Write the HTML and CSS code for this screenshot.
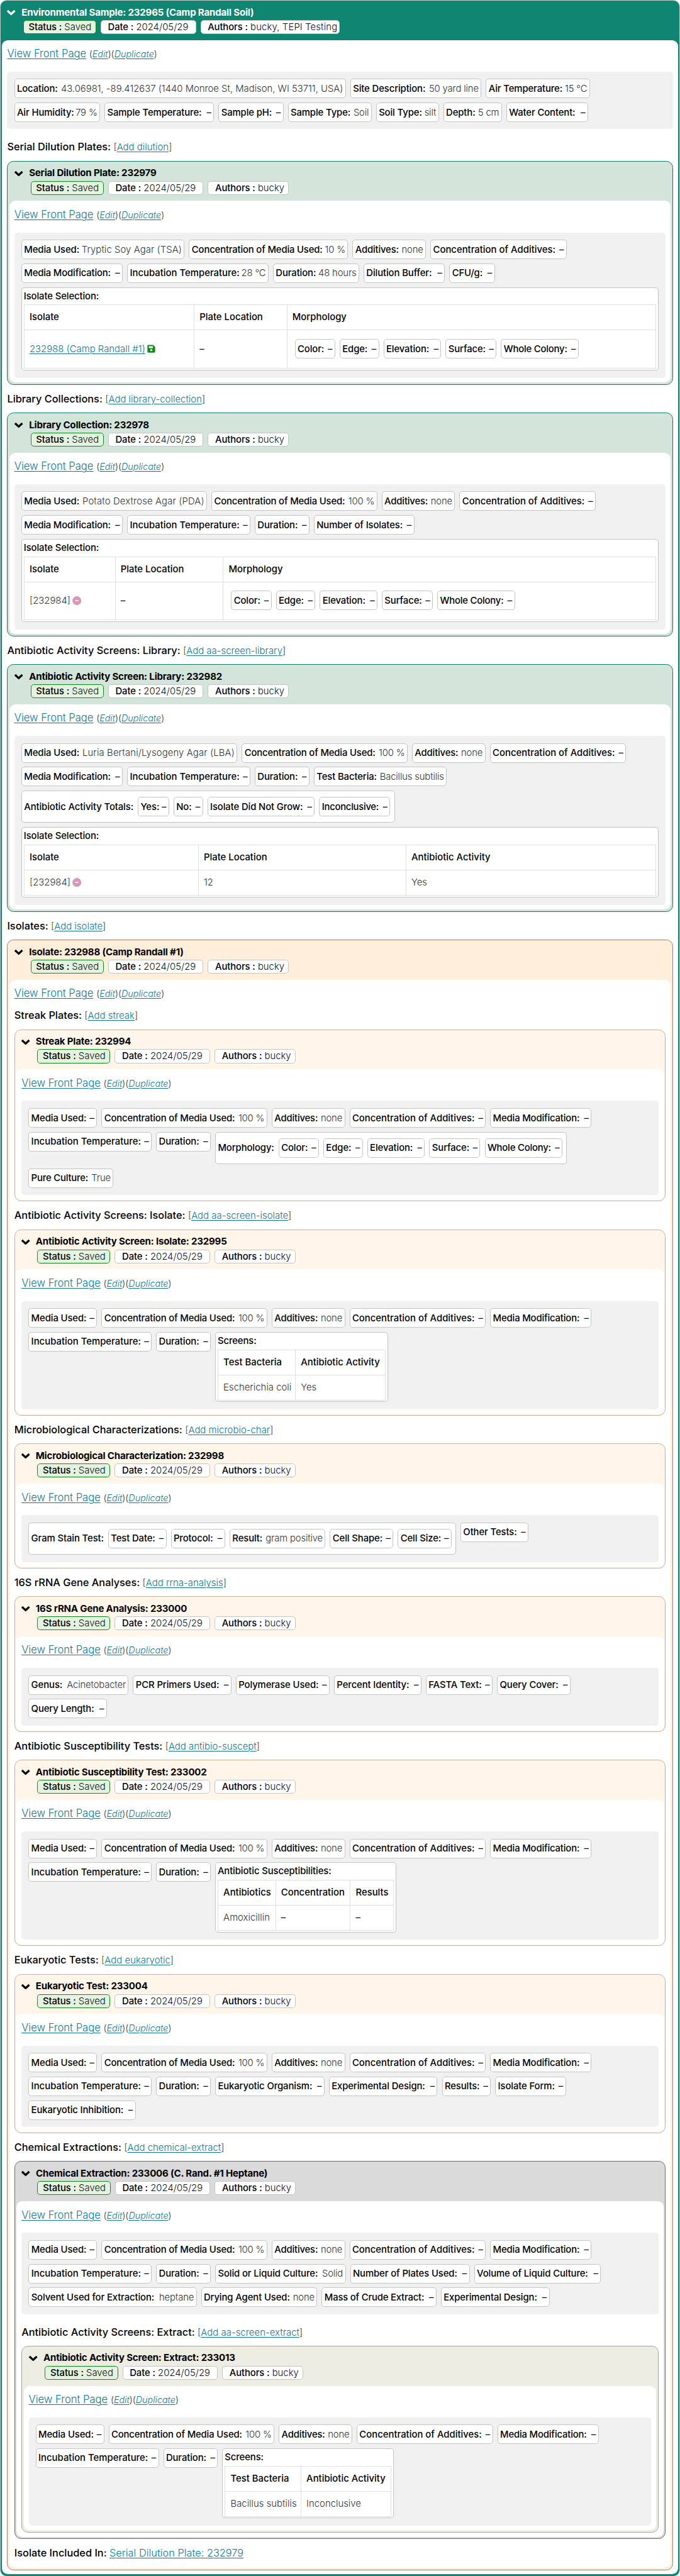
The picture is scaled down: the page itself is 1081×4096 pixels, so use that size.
FILE: index.html
```html
<!DOCTYPE html>
<html lang="en">
<head>
<meta charset="utf-8">
<title>Environmental Sample: 232965</title>
<link rel="stylesheet" href="styles.css">
</head>
<body>
<svg class="defs" aria-hidden="true">
  <symbol id="chevron" viewBox="0 0 16 10"><path d="M2 2l6 5.6L14 2" fill="none" stroke="currentColor" stroke-width="3.4"/></symbol>
  <symbol id="save" viewBox="0 0 14 14"><path fill="#118a1d" fill-rule="evenodd" d="M2 .5h8.2L13.6 4v8a1.6 1.6 0 0 1-1.6 1.6H2A1.6 1.6 0 0 1 .4 12V2A1.6 1.6 0 0 1 2 .5zM2.8 2.6v3.2h7V2.6zM7 7.6a1.9 1.9 0 1 0 0 3.8 1.9 1.9 0 0 0 0-3.8z"/></symbol>
  <symbol id="minus" viewBox="0 0 15 15"><circle cx="7.5" cy="7.5" r="7.4" fill="#d998b8"/><path d="M5 7.5h5" stroke="#fff" stroke-width="1.8"/></symbol>
</svg>
<article class="card sample">
  <header class="head">
    <h2 class="title"><svg class="chev"><use href="#chevron"/></svg>Environmental Sample: 232965 (Camp Randall Soil)</h2>
    <div class="meta"><span class="tag saved"><b>Status :</b> Saved</span><span class="tag date"><b>Date :</b> 2024/05/29</span><span class="tag team"><b>Authors :</b> bucky, TEPI Testing</span></div>
  </header>
  <div class="body">
    <p class="view"><a href="#">View Front Page</a> <small>(<a href="#"><i>Edit</i></a>)(<a href="#"><i>Duplicate</i></a>)</small></p>
    <div class="panel">
      <div class="row"><span class="chip location"><b>Location:</b><span>43.06981, -89.412637 (1440 Monroe St, Madison, WI 53711, USA)</span></span><span class="chip site"><b>Site Description:</b><span>50 yard line</span></span><span class="chip air-temp"><b>Air Temperature:</b><span>15 °C</span></span></div>
      <div class="row"><span class="chip humidity"><b>Air Humidity:</b><span>79 %</span></span><span class="chip sample-temp"><b>Sample Temperature:</b><em>–</em></span><span class="chip ph"><b>Sample pH:</b><em>–</em></span><span class="chip sample-type"><b>Sample Type:</b><span>Soil</span></span><span class="chip soil-type"><b>Soil Type:</b><span>silt</span></span><span class="chip depth"><b>Depth:</b><span>5 cm</span></span><span class="chip water"><b>Water Content:</b><em>–</em></span></div>
    </div>

    <h3 class="section after-panel">Serial Dilution Plates: <small>[<a href="#">Add dilution</a>]</small></h3>
    <article class="card green">
      <header class="head">
        <h2 class="title"><svg class="chev"><use href="#chevron"/></svg>Serial Dilution Plate: 232979</h2>
        <div class="meta"><span class="tag saved"><b>Status :</b> Saved</span><span class="tag date"><b>Date :</b> 2024/05/29</span><span class="tag author"><b>Authors :</b> bucky</span></div>
      </header>
      <div class="body">
        <p class="view"><a href="#">View Front Page</a> <small>(<a href="#"><i>Edit</i></a>)(<a href="#"><i>Duplicate</i></a>)</small></p>
        <div class="panel">
          <div class="row"><span class="chip media-tsa"><b>Media Used:</b><span>Tryptic Soy Agar (TSA)</span></span><span class="chip conc-10"><b>Concentration of Media Used:</b><span>10 %</span></span><span class="chip additives"><b>Additives:</b><span>none</span></span><span class="chip conc-add"><b>Concentration of Additives:</b><em>–</em></span></div>
          <div class="row"><span class="chip media-mod"><b>Media Modification:</b><em>–</em></span><span class="chip incubation-28"><b>Incubation Temperature:</b><span>28 °C</span></span><span class="chip duration-48"><b>Duration:</b><span>48 hours</span></span><span class="chip buffer"><b>Dilution Buffer:</b><em>–</em></span><span class="chip cfu"><b>CFU/g:</b><em>–</em></span></div>
          <div class="box wide">
            <b class="label">Isolate Selection:</b>
            <table class="grid dilution">
              <tr><th>Isolate</th><th>Plate Location</th><th>Morphology</th></tr>
              <tr class="tall"><td><a href="#">232988 (Camp Randall #1)</a><svg class="save"><use href="#save"/></svg></td><td><em>–</em></td><td><div class="row inset"><span class="chip color"><b>Color:</b><em>–</em></span><span class="chip edge"><b>Edge:</b><em>–</em></span><span class="chip elevation"><b>Elevation:</b><em>–</em></span><span class="chip surface"><b>Surface:</b><em>–</em></span><span class="chip colony"><b>Whole Colony:</b><em>–</em></span></div></td></tr>
            </table>
          </div>
        </div>
      </div>
    </article>

    <h3 class="section">Library Collections: <small>[<a href="#">Add library-collection</a>]</small></h3>
    <article class="card green">
      <header class="head">
        <h2 class="title"><svg class="chev"><use href="#chevron"/></svg>Library Collection: 232978</h2>
        <div class="meta"><span class="tag saved"><b>Status :</b> Saved</span><span class="tag date"><b>Date :</b> 2024/05/29</span><span class="tag author"><b>Authors :</b> bucky</span></div>
      </header>
      <div class="body">
        <p class="view"><a href="#">View Front Page</a> <small>(<a href="#"><i>Edit</i></a>)(<a href="#"><i>Duplicate</i></a>)</small></p>
        <div class="panel">
          <div class="row"><span class="chip media-pda"><b>Media Used:</b><span>Potato Dextrose Agar (PDA)</span></span><span class="chip conc-media"><b>Concentration of Media Used:</b><span>100 %</span></span><span class="chip additives"><b>Additives:</b><span>none</span></span><span class="chip conc-add"><b>Concentration of Additives:</b><em>–</em></span></div>
          <div class="row"><span class="chip media-mod"><b>Media Modification:</b><em>–</em></span><span class="chip incubation"><b>Incubation Temperature:</b><em>–</em></span><span class="chip duration"><b>Duration:</b><em>–</em></span><span class="chip isolates"><b>Number of Isolates:</b><em>–</em></span></div>
          <div class="box wide">
            <b class="label">Isolate Selection:</b>
            <table class="grid library">
              <tr><th>Isolate</th><th>Plate Location</th><th>Morphology</th></tr>
              <tr class="tall"><td>[232984]<svg class="minus"><use href="#minus"/></svg></td><td><em>–</em></td><td><div class="row inset"><span class="chip color"><b>Color:</b><em>–</em></span><span class="chip edge"><b>Edge:</b><em>–</em></span><span class="chip elevation"><b>Elevation:</b><em>–</em></span><span class="chip surface"><b>Surface:</b><em>–</em></span><span class="chip colony"><b>Whole Colony:</b><em>–</em></span></div></td></tr>
            </table>
          </div>
        </div>
      </div>
    </article>

    <h3 class="section">Antibiotic Activity Screens: Library: <small>[<a href="#">Add aa-screen-library</a>]</small></h3>
    <article class="card green">
      <header class="head">
        <h2 class="title"><svg class="chev"><use href="#chevron"/></svg>Antibiotic Activity Screen: Library: 232982</h2>
        <div class="meta"><span class="tag saved"><b>Status :</b> Saved</span><span class="tag date"><b>Date :</b> 2024/05/29</span><span class="tag author"><b>Authors :</b> bucky</span></div>
      </header>
      <div class="body">
        <p class="view"><a href="#">View Front Page</a> <small>(<a href="#"><i>Edit</i></a>)(<a href="#"><i>Duplicate</i></a>)</small></p>
        <div class="panel">
          <div class="row"><span class="chip media-lba"><b>Media Used:</b><span>Luria Bertani/Lysogeny Agar (LBA)</span></span><span class="chip conc-media"><b>Concentration of Media Used:</b><span>100 %</span></span><span class="chip additives"><b>Additives:</b><span>none</span></span><span class="chip conc-add"><b>Concentration of Additives:</b><em>–</em></span></div>
          <div class="row"><span class="chip media-mod"><b>Media Modification:</b><em>–</em></span><span class="chip incubation"><b>Incubation Temperature:</b><em>–</em></span><span class="chip duration"><b>Duration:</b><em>–</em></span><span class="chip bacteria"><b>Test Bacteria:</b><span>Bacillus subtilis</span></span></div>
          <div class="row"><div class="group"><b>Antibiotic Activity Totals:</b><div class="row"><span class="chip yes"><b>Yes:</b><em>–</em></span><span class="chip no"><b>No:</b><em>–</em></span><span class="chip no-growth"><b>Isolate Did Not Grow:</b><em>–</em></span><span class="chip inconclusive"><b>Inconclusive:</b><em>–</em></span></div></div></div>
          <div class="box wide">
            <b class="label">Isolate Selection:</b>
            <table class="grid screen">
              <tr><th>Isolate</th><th>Plate Location</th><th>Antibiotic Activity</th></tr>
              <tr><td>[232984]<svg class="minus"><use href="#minus"/></svg></td><td>12</td><td>Yes</td></tr>
            </table>
          </div>
        </div>
      </div>
    </article>

    <h3 class="section">Isolates: <small>[<a href="#">Add isolate</a>]</small></h3>
    <article class="card isolate">
      <header class="head">
        <h2 class="title"><svg class="chev"><use href="#chevron"/></svg>Isolate: 232988 (Camp Randall #1)</h2>
        <div class="meta"><span class="tag saved"><b>Status :</b> Saved</span><span class="tag date"><b>Date :</b> 2024/05/29</span><span class="tag author"><b>Authors :</b> bucky</span></div>
      </header>
      <div class="body">
        <p class="view"><a href="#">View Front Page</a> <small>(<a href="#"><i>Edit</i></a>)(<a href="#"><i>Duplicate</i></a>)</small></p>

        <h3 class="section after-view">Streak Plates: <small>[<a href="#">Add streak</a>]</small></h3>
        <article class="card cream">
          <header class="head">
            <h2 class="title"><svg class="chev"><use href="#chevron"/></svg>Streak Plate: 232994</h2>
            <div class="meta"><span class="tag saved"><b>Status :</b> Saved</span><span class="tag date"><b>Date :</b> 2024/05/29</span><span class="tag author"><b>Authors :</b> bucky</span></div>
          </header>
          <div class="body">
            <p class="view"><a href="#">View Front Page</a> <small>(<a href="#"><i>Edit</i></a>)(<a href="#"><i>Duplicate</i></a>)</small></p>
            <div class="panel">
              <div class="row"><span class="chip media"><b>Media Used:</b><em>–</em></span><span class="chip conc-media"><b>Concentration of Media Used:</b><span>100 %</span></span><span class="chip additives"><b>Additives:</b><span>none</span></span><span class="chip conc-add"><b>Concentration of Additives:</b><em>–</em></span><span class="chip media-mod"><b>Media Modification:</b><em>–</em></span></div>
              <div class="row"><span class="chip incubation"><b>Incubation Temperature:</b><em>–</em></span><span class="chip duration"><b>Duration:</b><em>–</em></span><div class="group"><b>Morphology:</b><div class="row"><span class="chip color"><b>Color:</b><em>–</em></span><span class="chip edge"><b>Edge:</b><em>–</em></span><span class="chip elevation"><b>Elevation:</b><em>–</em></span><span class="chip surface"><b>Surface:</b><em>–</em></span><span class="chip colony"><b>Whole Colony:</b><em>–</em></span></div></div></div>
              <div class="row"><span class="chip culture"><b>Pure Culture:</b><span>True</span></span></div>
            </div>
          </div>
        </article>

        <h3 class="section">Antibiotic Activity Screens: Isolate: <small>[<a href="#">Add aa-screen-isolate</a>]</small></h3>
        <article class="card cream">
          <header class="head">
            <h2 class="title"><svg class="chev"><use href="#chevron"/></svg>Antibiotic Activity Screen: Isolate: 232995</h2>
            <div class="meta"><span class="tag saved"><b>Status :</b> Saved</span><span class="tag date"><b>Date :</b> 2024/05/29</span><span class="tag author"><b>Authors :</b> bucky</span></div>
          </header>
          <div class="body">
            <p class="view"><a href="#">View Front Page</a> <small>(<a href="#"><i>Edit</i></a>)(<a href="#"><i>Duplicate</i></a>)</small></p>
            <div class="panel">
              <div class="row"><span class="chip media"><b>Media Used:</b><em>–</em></span><span class="chip conc-media"><b>Concentration of Media Used:</b><span>100 %</span></span><span class="chip additives"><b>Additives:</b><span>none</span></span><span class="chip conc-add"><b>Concentration of Additives:</b><em>–</em></span><span class="chip media-mod"><b>Media Modification:</b><em>–</em></span></div>
              <div class="row"><span class="chip incubation"><b>Incubation Temperature:</b><em>–</em></span><span class="chip duration"><b>Duration:</b><em>–</em></span>
                <div class="box screens-isolate">
                  <b class="label">Screens:</b>
                  <table class="grid bacteria-isolate">
                    <tr><th>Test Bacteria</th><th>Antibiotic Activity</th></tr>
                    <tr><td>Escherichia coli</td><td>Yes</td></tr>
                  </table>
                </div>
              </div>
            </div>
          </div>
        </article>

        <h3 class="section">Microbiological Characterizations: <small>[<a href="#">Add microbio-char</a>]</small></h3>
        <article class="card cream">
          <header class="head">
            <h2 class="title"><svg class="chev"><use href="#chevron"/></svg>Microbiological Characterization: 232998</h2>
            <div class="meta"><span class="tag saved"><b>Status :</b> Saved</span><span class="tag date"><b>Date :</b> 2024/05/29</span><span class="tag author"><b>Authors :</b> bucky</span></div>
          </header>
          <div class="body">
            <p class="view"><a href="#">View Front Page</a> <small>(<a href="#"><i>Edit</i></a>)(<a href="#"><i>Duplicate</i></a>)</small></p>
            <div class="panel">
              <div class="row"><div class="group"><b>Gram Stain Test:</b><div class="row"><span class="chip test-date"><b>Test Date:</b><em>–</em></span><span class="chip protocol"><b>Protocol:</b><em>–</em></span><span class="chip result"><b>Result:</b><span>gram positive</span></span><span class="chip cell-shape"><b>Cell Shape:</b><em>–</em></span><span class="chip cell-size"><b>Cell Size:</b><em>–</em></span></div></div><span class="chip other"><b>Other Tests:</b><em>–</em></span></div>
            </div>
          </div>
        </article>

        <h3 class="section">16S rRNA Gene Analyses: <small>[<a href="#">Add rrna-analysis</a>]</small></h3>
        <article class="card cream">
          <header class="head">
            <h2 class="title"><svg class="chev"><use href="#chevron"/></svg>16S rRNA Gene Analysis: 233000</h2>
            <div class="meta"><span class="tag saved"><b>Status :</b> Saved</span><span class="tag date"><b>Date :</b> 2024/05/29</span><span class="tag author"><b>Authors :</b> bucky</span></div>
          </header>
          <div class="body">
            <p class="view"><a href="#">View Front Page</a> <small>(<a href="#"><i>Edit</i></a>)(<a href="#"><i>Duplicate</i></a>)</small></p>
            <div class="panel">
              <div class="row"><span class="chip genus"><b>Genus:</b><span>Acinetobacter</span></span><span class="chip pcr"><b>PCR Primers Used:</b><em>–</em></span><span class="chip polymerase"><b>Polymerase Used:</b><em>–</em></span><span class="chip identity"><b>Percent Identity:</b><em>–</em></span><span class="chip fasta"><b>FASTA Text:</b><em>–</em></span><span class="chip cover"><b>Query Cover:</b><em>–</em></span></div>
              <div class="row"><span class="chip length"><b>Query Length:</b><em>–</em></span></div>
            </div>
          </div>
        </article>

        <h3 class="section">Antibiotic Susceptibility Tests: <small>[<a href="#">Add antibio-suscept</a>]</small></h3>
        <article class="card cream">
          <header class="head">
            <h2 class="title"><svg class="chev"><use href="#chevron"/></svg>Antibiotic Susceptibility Test: 233002</h2>
            <div class="meta"><span class="tag saved"><b>Status :</b> Saved</span><span class="tag date"><b>Date :</b> 2024/05/29</span><span class="tag author"><b>Authors :</b> bucky</span></div>
          </header>
          <div class="body">
            <p class="view"><a href="#">View Front Page</a> <small>(<a href="#"><i>Edit</i></a>)(<a href="#"><i>Duplicate</i></a>)</small></p>
            <div class="panel">
              <div class="row"><span class="chip media"><b>Media Used:</b><em>–</em></span><span class="chip conc-media"><b>Concentration of Media Used:</b><span>100 %</span></span><span class="chip additives"><b>Additives:</b><span>none</span></span><span class="chip conc-add"><b>Concentration of Additives:</b><em>–</em></span><span class="chip media-mod"><b>Media Modification:</b><em>–</em></span></div>
              <div class="row"><span class="chip incubation"><b>Incubation Temperature:</b><em>–</em></span><span class="chip duration"><b>Duration:</b><em>–</em></span>
                <div class="box suscept">
                  <b class="label">Antibiotic Susceptibilities:</b>
                  <table class="grid antibiotics">
                    <tr><th>Antibiotics</th><th>Concentration</th><th>Results</th></tr>
                    <tr><td>Amoxicillin</td><td><em>–</em></td><td><em>–</em></td></tr>
                  </table>
                </div>
              </div>
            </div>
          </div>
        </article>

        <h3 class="section">Eukaryotic Tests: <small>[<a href="#">Add eukaryotic</a>]</small></h3>
        <article class="card cream">
          <header class="head">
            <h2 class="title"><svg class="chev"><use href="#chevron"/></svg>Eukaryotic Test: 233004</h2>
            <div class="meta"><span class="tag saved"><b>Status :</b> Saved</span><span class="tag date"><b>Date :</b> 2024/05/29</span><span class="tag author"><b>Authors :</b> bucky</span></div>
          </header>
          <div class="body">
            <p class="view"><a href="#">View Front Page</a> <small>(<a href="#"><i>Edit</i></a>)(<a href="#"><i>Duplicate</i></a>)</small></p>
            <div class="panel">
              <div class="row"><span class="chip media"><b>Media Used:</b><em>–</em></span><span class="chip conc-media"><b>Concentration of Media Used:</b><span>100 %</span></span><span class="chip additives"><b>Additives:</b><span>none</span></span><span class="chip conc-add"><b>Concentration of Additives:</b><em>–</em></span><span class="chip media-mod"><b>Media Modification:</b><em>–</em></span></div>
              <div class="row"><span class="chip incubation"><b>Incubation Temperature:</b><em>–</em></span><span class="chip duration"><b>Duration:</b><em>–</em></span><span class="chip organism"><b>Eukaryotic Organism:</b><em>–</em></span><span class="chip design"><b>Experimental Design:</b><em>–</em></span><span class="chip results"><b>Results:</b><em>–</em></span><span class="chip form"><b>Isolate Form:</b><em>–</em></span></div>
              <div class="row"><span class="chip inhibition"><b>Eukaryotic Inhibition:</b><em>–</em></span></div>
            </div>
          </div>
        </article>

        <h3 class="section">Chemical Extractions: <small>[<a href="#">Add chemical-extract</a>]</small></h3>
        <article class="card gray">
          <header class="head">
            <h2 class="title"><svg class="chev"><use href="#chevron"/></svg>Chemical Extraction: 233006 (C. Rand. #1 Heptane)</h2>
            <div class="meta"><span class="tag saved"><b>Status :</b> Saved</span><span class="tag date"><b>Date :</b> 2024/05/29</span><span class="tag author"><b>Authors :</b> bucky</span></div>
          </header>
          <div class="body">
            <p class="view"><a href="#">View Front Page</a> <small>(<a href="#"><i>Edit</i></a>)(<a href="#"><i>Duplicate</i></a>)</small></p>
            <div class="panel">
              <div class="row"><span class="chip media"><b>Media Used:</b><em>–</em></span><span class="chip conc-media"><b>Concentration of Media Used:</b><span>100 %</span></span><span class="chip additives"><b>Additives:</b><span>none</span></span><span class="chip conc-add"><b>Concentration of Additives:</b><em>–</em></span><span class="chip media-mod"><b>Media Modification:</b><em>–</em></span></div>
              <div class="row"><span class="chip incubation"><b>Incubation Temperature:</b><em>–</em></span><span class="chip duration"><b>Duration:</b><em>–</em></span><span class="chip culture-type"><b>Solid or Liquid Culture:</b><span>Solid</span></span><span class="chip plates"><b>Number of Plates Used:</b><em>–</em></span><span class="chip volume"><b>Volume of Liquid Culture:</b><em>–</em></span></div>
              <div class="row"><span class="chip solvent"><b>Solvent Used for Extraction:</b><span>heptane</span></span><span class="chip drying"><b>Drying Agent Used:</b><span>none</span></span><span class="chip mass"><b>Mass of Crude Extract:</b><em>–</em></span><span class="chip design"><b>Experimental Design:</b><em>–</em></span></div>
            </div>

            <h3 class="section after-panel">Antibiotic Activity Screens: Extract: <small>[<a href="#">Add aa-screen-extract</a>]</small></h3>
            <article class="card sage">
              <header class="head">
                <h2 class="title"><svg class="chev"><use href="#chevron"/></svg>Antibiotic Activity Screen: Extract: 233013</h2>
                <div class="meta"><span class="tag saved"><b>Status :</b> Saved</span><span class="tag date"><b>Date :</b> 2024/05/29</span><span class="tag author"><b>Authors :</b> bucky</span></div>
              </header>
              <div class="body">
                <p class="view"><a href="#">View Front Page</a> <small>(<a href="#"><i>Edit</i></a>)(<a href="#"><i>Duplicate</i></a>)</small></p>
                <div class="panel">
                  <div class="row"><span class="chip media"><b>Media Used:</b><em>–</em></span><span class="chip conc-media"><b>Concentration of Media Used:</b><span>100 %</span></span><span class="chip additives"><b>Additives:</b><span>none</span></span><span class="chip conc-add"><b>Concentration of Additives:</b><em>–</em></span><span class="chip media-mod"><b>Media Modification:</b><em>–</em></span></div>
                  <div class="row"><span class="chip incubation"><b>Incubation Temperature:</b><em>–</em></span><span class="chip duration"><b>Duration:</b><em>–</em></span>
                    <div class="box screens-extract">
                      <b class="label">Screens:</b>
                      <table class="grid bacteria-extract">
                        <tr><th>Test Bacteria</th><th>Antibiotic Activity</th></tr>
                        <tr><td>Bacillus subtilis</td><td>Inconclusive</td></tr>
                      </table>
                    </div>
                  </div>
                </div>
              </div>
            </article>
          </div>
        </article>

        <h3 class="section last">Isolate Included In: <a href="#">Serial Dilution Plate: 232979</a></h3>
      </div>
    </article>
  </div>
</article>
</body>
</html>
```
FILE: styles.css
```css
/* 1rem is ten design pixels */
html { font-size: 9.65px; background: #fff; }
*, *::before, *::after { box-sizing: border-box; }
body {
  margin: 0;
  font-family: Inter, "Liberation Sans", sans-serif;
  font-size: 1.544rem;
  font-weight: 300;
  color: #333;
}
.defs { display: none; }
a { color: #0c7a94; text-decoration: underline; text-underline-offset: .2rem; text-decoration-thickness: 1px; }
b { font-weight: 500; color: #000; letter-spacing: -.008em; }
em { font-style: normal; font-weight: 400; color: #000; }

/* Cards */
.card {
  --tint: #fff;
  --line: #999;
  --edge: .25rem;
  border: 1px solid var(--line);
  border-radius: 1.1rem;
  background: var(--tint);
  padding: 0 var(--edge) var(--edge);
}
.head { height: 6.5rem; padding-top: 1rem; }
.body {
  background: #fff;
  border-radius: 1rem;
  padding: 0 calc(1.15rem - 1px - var(--edge) + .03rem) .785rem;
}
.sample { --tint: #0f8671; --line: #c3c7c6; --edge: .2rem; padding-bottom: .3rem; }
.sample > .body { padding: 0 .88rem .65rem; }
.green { --tint: #d3e5da; --line: #107562; }
.isolate { --tint: #ffeeda; --line: #93836a; }
.cream { --tint: #fff5e8; --line: #bfb19c; --edge: .17rem; }
.gray { --tint: #dadada; --line: #6c6c6c; --edge: .2rem; }
.sage { --tint: #eeede3; --line: #a2a399; }

.title {
  display: flex;
  align-items: center;
  margin: 0;
  height: 1.9rem;
  padding-left: .75rem;
  font-size: 1.56rem;
  font-weight: 700;
  letter-spacing: -.012em;
  line-height: 1.9rem;
  color: #000;
  white-space: nowrap;
}
.sample > .head > .title { color: #fff; }
.chev { width: 1.6rem; height: 1rem; margin-right: .9rem; }

.meta { display: flex; gap: .73rem; padding: .3rem 0 0 3.5rem; }
.tag {
  height: 2.3rem;
  border: 1px solid #c4c4c4;
  border-radius: .5rem;
  background: #fff;
  padding-left: 1.1rem;
  line-height: 2.1rem;
  white-space: pre;
  color: #111;
}
.saved { width: 12.05rem; padding-left: .8rem; background: #e3f3e0; border-color: #118a1d; }
.date { width: 15.7rem; }
.author { width: 13.35rem; }
.team { width: 22.9rem; letter-spacing: .008em; }

/* Link lines */
.view {
  margin: 0;
  height: 5.2rem;
  padding-top: 1.1rem;
  font-size: 1.72rem;
  line-height: 2.4rem;
}
.view small { font-size: 1.49rem; }
.section {
  margin: 0;
  height: 4.6rem;
  padding-top: 1.15rem;
  font-size: 1.694rem;
  font-weight: 450;
  line-height: 2.4rem;
  color: #000;
}
.section small { font-size: 1.55rem; font-weight: 300; color: #444; }
.section > a { font-weight: 300; }
.after-panel { margin-top: .6rem; }
.after-view { margin-top: -1.62rem; }
.last { height: 4rem; }

/* Field panels */
.panel {
  display: flex;
  flex-direction: column;
  gap: .7rem;
  padding: 1.2rem 1.15rem 1.175rem;
  border-radius: .5rem;
  background: #f0f0f0;
}
.row { display: flex; align-items: flex-start; gap: .73rem; }
.chip, .group, .box {
  border: 1px solid #c4c4c4;
  border-radius: .5rem;
  background: #fff;
  flex: none;
}
.chip {
  display: flex;
  justify-content: space-between;
  align-items: center;
  height: 3.21rem;
  padding: 0 .35rem;
  white-space: nowrap;
}
.chip > span { letter-spacing: -.012em; }
.group { display: flex; align-items: center; gap: .73rem; height: 5.33rem; padding: 0 .65rem 0 .35rem; }
.box { padding: 0 .3rem; height: 11.55rem; }
.wide { height: auto; padding-bottom: .25rem; }
.label { display: block; height: 2.79rem; line-height: 2.9rem; }

/* Tables */
.grid { border-collapse: collapse; table-layout: fixed; width: 100%; }
.grid th, .grid td {
  height: 4.13rem;
  padding: 0 0 .1rem .85rem;
  border: 1px solid #dfdfdf;
  text-align: left;
  vertical-align: middle;
  white-space: nowrap;
}
.grid th { font-weight: 500; color: #000; }
.grid .tall td { height: 6.27rem; }
.inset { padding-left: .4rem; }
.dilution th:nth-child(1) { width: 28rem; }
.dilution th:nth-child(2) { width: 15.3rem; }
.library th:nth-child(1) { width: 15rem; }
.library th:nth-child(2) { width: 17.8rem; }
.screen th:nth-child(1) { width: 28.7rem; }
.screen th:nth-child(2) { width: 34.2rem; }
.bacteria-isolate th:nth-child(1) { width: 12.75rem; }
.bacteria-extract th:nth-child(1) { width: 12.5rem; }
.antibiotics th:nth-child(1) { width: 9.5rem; }
.antibiotics th:nth-child(2) { width: 12.3rem; }
.save { width: 1.35rem; height: 1.35rem; margin-left: .3rem; vertical-align: -.15rem; }
.minus { width: 1.48rem; height: 1.48rem; margin-left: .3rem; vertical-align: -.25rem; }

/* Field widths */
.location { width: 54.64rem; }
.site { width: 21.6rem; letter-spacing: -.015em; }
.air-temp { width: 17.15rem; }
.humidity { width: 14.15rem; }
.sample-temp { width: 18.05rem; }
.ph { width: 10.7rem; }
.sample-type { width: 13.8rem; }
.soil-type { width: 10.35rem; }
.depth { width: 9.65rem; }
.water { width: 13.5rem; }
.media { width: 11.3rem; }
.media-tsa { width: 26.9rem; }
.media-pda { width: 30.6rem; }
.media-lba { width: 35.6rem; }
.chip.location > span { letter-spacing: -.002em; }
.chip.media-tsa > span { letter-spacing: .004em; }
.chip.media-pda > span, .chip.media-lba > span { letter-spacing: .008em; }
.conc-media > b, .conc-10 > b { letter-spacing: -.012em; }
.conc-media { width: 27.3rem; }
.conc-10 { width: 26.2rem; }
.additives { width: 12.1rem; }
.additives > b { letter-spacing: -.012em; }
.conc-add { width: 22.45rem; }
.conc-add > b { letter-spacing: 0; }
.media-mod { width: 16.7rem; }
.media-mod > b { letter-spacing: -.012em; }
.incubation { width: 20.3rem; }
.incubation > b, .incubation-28 > b { letter-spacing: 0; }
.incubation-28 { width: 23.3rem; }
.duration { width: 9rem; }
.duration-48 { width: 14.2rem; }
.buffer { width: 13.4rem; }
.cfu { width: 7.5rem; }
.color { width: 6.65rem; }
.edge { width: 6.5rem; }
.elevation { width: 9.5rem; }
.surface { width: 8.4rem; }
.colony { width: 12.8rem; }
.colony > b { letter-spacing: -.014em; }
.isolates { width: 16.55rem; }
.bacteria { width: 21.9rem; }
.yes { width: 5.15rem; }
.no { width: 4.85rem; }
.no-growth { width: 17.7rem; }
.inconclusive { width: 11.7rem; }
.inconclusive > b { letter-spacing: -.02em; }
.culture { width: 14rem; }
.culture > b { letter-spacing: -.014em; }
.screens-isolate { width: 28.5rem; }
.screens-extract { width: 28.25rem; }
.suscept { width: 29.8rem; }
.test-date { width: 9.6rem; }
.protocol { width: 8.95rem; }
.result { width: 15.8rem; }
.cell-shape { width: 10.45rem; }
.cell-size { width: 8.85rem; }
.other { width: 11.2rem; }
.genus { width: 16.5rem; }
.pcr { width: 16.2rem; }
.polymerase { width: 15.45rem; }
.identity { width: 14.4rem; }
.fasta { width: 11rem; }
.cover { width: 12.1rem; }
.length { width: 12.9rem; }
.organism { width: 18rem; }
.design { width: 17.9rem; }
.results { width: 8.05rem; }
.form { width: 11.65rem; }
.inhibition { width: 17.65rem; }
.culture-type { width: 21.5rem; }
.plates { width: 19.7rem; }
.volume { width: 20.9rem; }
.solvent { width: 27.7rem; }
.drying { width: 19.15rem; }
.mass { width: 18.9rem; }
.mass > b { letter-spacing: -.014em; }
```
